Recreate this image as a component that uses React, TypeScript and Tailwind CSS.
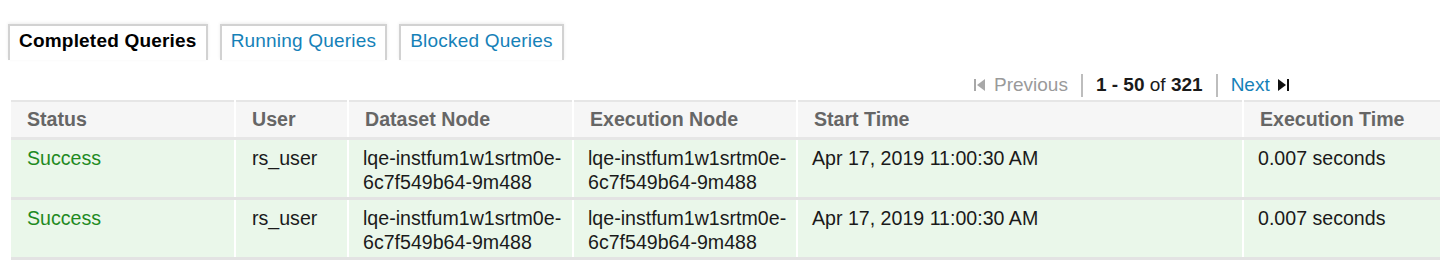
import React from 'react';

type Row = {
  status: string;
  user: string;
  datasetNode: string[];
  executionNode: string[];
  startTime: string;
  executionTime: string;
};

const rows: Row[] = [
  {
    status: 'Success',
    user: 'rs_user',
    datasetNode: ['lqe-instfum1w1srtm0e-', '6c7f549b64-9m488'],
    executionNode: ['lqe-instfum1w1srtm0e-', '6c7f549b64-9m488'],
    startTime: 'Apr 17, 2019 11:00:30 AM',
    executionTime: '0.007 seconds',
  },
  {
    status: 'Success',
    user: 'rs_user',
    datasetNode: ['lqe-instfum1w1srtm0e-', '6c7f549b64-9m488'],
    executionNode: ['lqe-instfum1w1srtm0e-', '6c7f549b64-9m488'],
    startTime: 'Apr 17, 2019 11:00:30 AM',
    executionTime: '0.007 seconds',
  },
];

const columns = [
  { label: 'Status', width: 'w-[224px]' },
  { label: 'User', width: 'w-[113px]' },
  { label: 'Dataset Node', width: 'w-[225px]' },
  { label: 'Execution Node', width: 'w-[224px]' },
  { label: 'Start Time', width: 'w-[446px]' },
  { label: 'Execution Time', width: 'w-[240px]' },
];

const tabs = [
  { label: 'Completed Queries', active: true },
  { label: 'Running Queries', active: false },
  { label: 'Blocked Queries', active: false },
];

const cell = 'px-[14px] pt-[6px] pb-[3px] leading-[24px] whitespace-nowrap border-l-2 border-white';

const App: React.FC = () => {
  return (
    <div
      className="w-[1440px] h-[262px] overflow-hidden bg-white text-[19.6px] text-[#1a1a1a]"
      style={{ fontFamily: '"Liberation Sans", Arial, sans-serif' }}
    >
      {/* Tabs */}
      <div className="flex gap-[12px] pl-[8px] pt-[24px] text-[19px]">
        {tabs.map(tab => (
          <div
            key={tab.label}
            className={`h-[36px] px-[9px] pt-[3px] border-2 border-b-0 border-[#d2d2d2] shadow-[0_-1px_3px_rgba(0,0,0,0.08)] leading-[24px] tracking-[0.2px] ${
              tab.active ? 'font-bold text-black' : 'text-[#1581b8]'
            }`}
          >
            {tab.label}
          </div>
        ))}
      </div>

      {/* Pagination */}
      <div className="mt-[12px] flex items-center h-[26px] pl-[974px] text-[19px]">
        <div className="flex items-center gap-[9px] text-[#9a9a9a]">
          <svg width="11" height="12" viewBox="0 0 11 12">
            <rect x="0" y="0" width="2" height="12" fill="#a8a8a8" />
            <polygon points="11,0 11,12 3,6" fill="#a8a8a8" />
          </svg>
          <span>Previous</span>
        </div>
        <div className="mx-[13px] w-[2px] h-[23px] bg-[#bdbdbd]" />
        <div>
          <span className="font-bold">1 - 50</span> of <span className="font-bold">321</span>
        </div>
        <div className="mx-[13px] w-[2px] h-[23px] bg-[#bdbdbd]" />
        <div className="flex items-center gap-[8px] text-[#1581b8]">
          <span>Next</span>
          <svg width="11" height="12" viewBox="0 0 11 12">
            <polygon points="0,0 0,12 8,6" fill="#111" />
            <rect x="9" y="0" width="2" height="12" fill="#111" />
          </svg>
        </div>
      </div>

      {/* Table */}
      <table className="ml-[11px] mt-[2px] border-collapse table-fixed w-[1472px]">
        <thead>
          <tr className="bg-[#f6f6f6] border-t-2 border-b-[3px] border-[#e6e6e6]">
            {columns.map((col, i) => (
              <th
                key={col.label}
                className={`${col.width} h-[37px] px-[16px] text-left font-bold text-[#666] leading-[24px] whitespace-nowrap ${
                  i > 0 ? 'border-l-2 border-white' : ''
                }`}
              >
                {col.label}
              </th>
            ))}
          </tr>
        </thead>
        <tbody>
          {rows.map((row, idx) => (
            <tr key={idx} className="bg-[#eaf7ea] border-b-[3px] border-[#e3e3e3] align-top">
              <td className="px-[16px] pt-[6px] pb-[3px] leading-[24px] text-[#1f8a1f]">{row.status}</td>
              <td className={`${cell} px-[16px]`}>{row.user}</td>
              <td className={cell}>
                {row.datasetNode.map(line => (
                  <div key={line}>{line}</div>
                ))}
              </td>
              <td className={cell}>
                {row.executionNode.map(line => (
                  <div key={line}>{line}</div>
                ))}
              </td>
              <td className={cell}>{row.startTime}</td>
              <td className={cell}>{row.executionTime}</td>
            </tr>
          ))}
        </tbody>
      </table>
    </div>
  );
};

export default App;
